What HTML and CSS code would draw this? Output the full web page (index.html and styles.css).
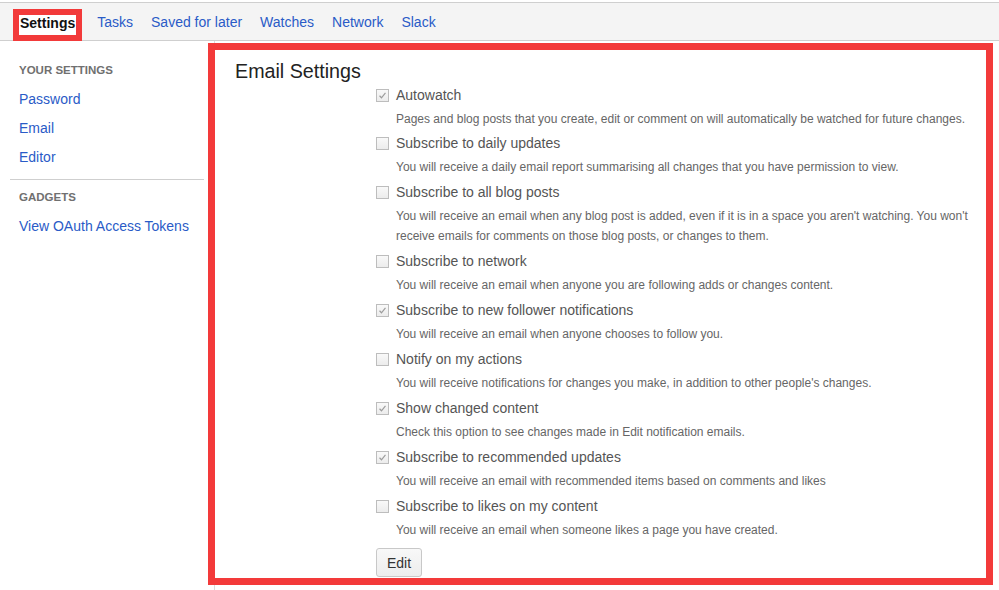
FILE: index.html
```html
<!DOCTYPE html>
<html lang="en">
<head>
  <meta charset="UTF-8">
  <title>Email Settings</title>
  <link rel="stylesheet" href="styles.css">
</head>
<body>

  <div class="top-nav">
    <a href="#" class="tab active">Settings</a>
    <a href="#" class="tab">Tasks</a>
    <a href="#" class="tab">Saved for later</a>
    <a href="#" class="tab">Watches</a>
    <a href="#" class="tab">Network</a>
    <a href="#" class="tab">Slack</a>
  </div>

  <div class="page">
    <div class="sidebar">
      <div class="side-heading">Your Settings</div>
      <a href="#" class="side-link">Password</a>
      <a href="#" class="side-link">Email</a>
      <a href="#" class="side-link">Editor</a>
      <div class="side-divider"></div>
      <div class="side-heading gadgets">Gadgets</div>
      <a href="#" class="side-link oauth">View OAuth Access Tokens</a>
    </div>

    <div class="content">
      <h2>Email Settings</h2>

      <div class="options">
        <div class="option first">
          <div class="option-label"><span class="cb checked"><svg viewBox="0 0 13 13"><path d="M3 6.8 L5.3 9.2 L10 3.5"/></svg></span>Autowatch</div>
          <div class="desc">Pages and blog posts that you create, edit or comment on will automatically be watched for future changes.</div>
        </div>
        <div class="option">
          <div class="option-label"><span class="cb"></span>Subscribe to daily updates</div>
          <div class="desc">You will receive a daily email report summarising all changes that you have permission to view.</div>
        </div>
        <div class="option">
          <div class="option-label"><span class="cb"></span>Subscribe to all blog posts</div>
          <div class="desc">You will receive an email when any blog post is added, even if it is in a space you aren't watching. You won't receive emails for comments on those blog posts, or changes to them.</div>
        </div>
        <div class="option">
          <div class="option-label"><span class="cb"></span>Subscribe to network</div>
          <div class="desc">You will receive an email when anyone you are following adds or changes content.</div>
        </div>
        <div class="option">
          <div class="option-label"><span class="cb checked"><svg viewBox="0 0 13 13"><path d="M3 6.8 L5.3 9.2 L10 3.5"/></svg></span>Subscribe to new follower notifications</div>
          <div class="desc">You will receive an email when anyone chooses to follow you.</div>
        </div>
        <div class="option">
          <div class="option-label"><span class="cb"></span>Notify on my actions</div>
          <div class="desc">You will receive notifications for changes you make, in addition to other people's changes.</div>
        </div>
        <div class="option">
          <div class="option-label"><span class="cb checked"><svg viewBox="0 0 13 13"><path d="M3 6.8 L5.3 9.2 L10 3.5"/></svg></span>Show changed content</div>
          <div class="desc">Check this option to see changes made in Edit notification emails.</div>
        </div>
        <div class="option">
          <div class="option-label"><span class="cb checked"><svg viewBox="0 0 13 13"><path d="M3 6.8 L5.3 9.2 L10 3.5"/></svg></span>Subscribe to recommended updates</div>
          <div class="desc">You will receive an email with recommended items based on comments and likes</div>
        </div>
        <div class="option">
          <div class="option-label"><span class="cb"></span>Subscribe to likes on my content</div>
          <div class="desc">You will receive an email when someone likes a page you have created.</div>
        </div>

        <button class="edit-btn">Edit</button>
      </div>
    </div>
  </div>

</body>
</html>
```

FILE: styles.css
```css
body {
  margin: 0;
  font-family: 'Liberation Sans', Arial, sans-serif;
  color: #333;
  background: #fff;
  overflow: hidden;
}

a {
  text-decoration: none;
}

/* Top tabs */
.top-nav {
  margin-top: 2px;
  height: 37px;
  background: #f4f4f4;
  border-top: 1px solid #cfcfcf;
  border-bottom: 1px solid #cfcfcf;
  display: flex;
  align-items: flex-start;
  padding-left: 13px;
}

.tab {
  color: #2a5bc7;
  font-size: 14px;
  line-height: 20px;
  padding: 9px 8px 0 10px;
}

.tab.active {
  color: #111;
  font-weight: bold;
  background: #fff;
  border: 6px solid #f23a3a;
  padding: 0 1px;
  margin-top: 6px;
  height: 20px;
  line-height: 17px;
  margin-right: 5px;
}

/* Page */
.page {
  display: flex;
}

.sidebar {
  width: 215px;
  flex-shrink: 0;
  border-right: 1px solid #dcdcdc;
  height: 551px;
  padding-top: 19px;
  box-sizing: border-box;
}

.side-heading {
  font-size: 11.5px;
  font-weight: bold;
  text-transform: uppercase;
  color: #707070;
  line-height: 20px;
  padding-left: 19px;
  margin-bottom: 5px;
}

.side-heading.gadgets {
  margin-top: 7px;
  margin-bottom: 5px;
}

.side-link {
  display: block;
  color: #2a5bc7;
  font-size: 14px;
  line-height: 29px;
  padding-left: 19px;
}

.side-divider {
  margin: 7px 10px 0 10px;
  border-top: 1px solid #cfcfcf;
}

/* Content (annotated) */
.content {
  margin: 2px 5px 5px -7px;
  width: 785px;
  height: 542px;
  box-sizing: border-box;
  border: 7px solid #f33a3a;
  padding: 10px 8px 0 20px;
  background: #fff;
}

.content h2 {
  margin: 0;
  font-size: 19.7px;
  font-weight: normal;
  line-height: 23px;
  color: #222;
}

.options {
  margin-left: 141px;
}

.option {
  margin-bottom: 3px;
}

.option.first {
  margin-bottom: 2px;
}

.option-label {
  display: flex;
  align-items: center;
  height: 24px;
  font-size: 14px;
  color: #555;
}

.cb {
  width: 11px;
  height: 11px;
  border: 1px solid #bdbdbd;
  background: linear-gradient(#f9f9f9, #ececec);
  margin-right: 7px;
  display: inline-flex;
}

.cb svg {
  width: 11px;
  height: 11px;
  fill: none;
  stroke: #9c9c9c;
  stroke-width: 1.4;
}

.desc {
  margin-top: 2px;
  padding-left: 20px;
  font-size: 12px;
  line-height: 20px;
  color: #666;
}

.edit-btn {
  margin-top: 5px;
  width: 46px;
  height: 29px;
  font-family: 'Liberation Sans', Arial, sans-serif;
  font-size: 14px;
  color: #333;
  background: linear-gradient(#f8f8f8, #ededed);
  border: 1px solid #c8c8c8;
  border-radius: 3px;
}
```
